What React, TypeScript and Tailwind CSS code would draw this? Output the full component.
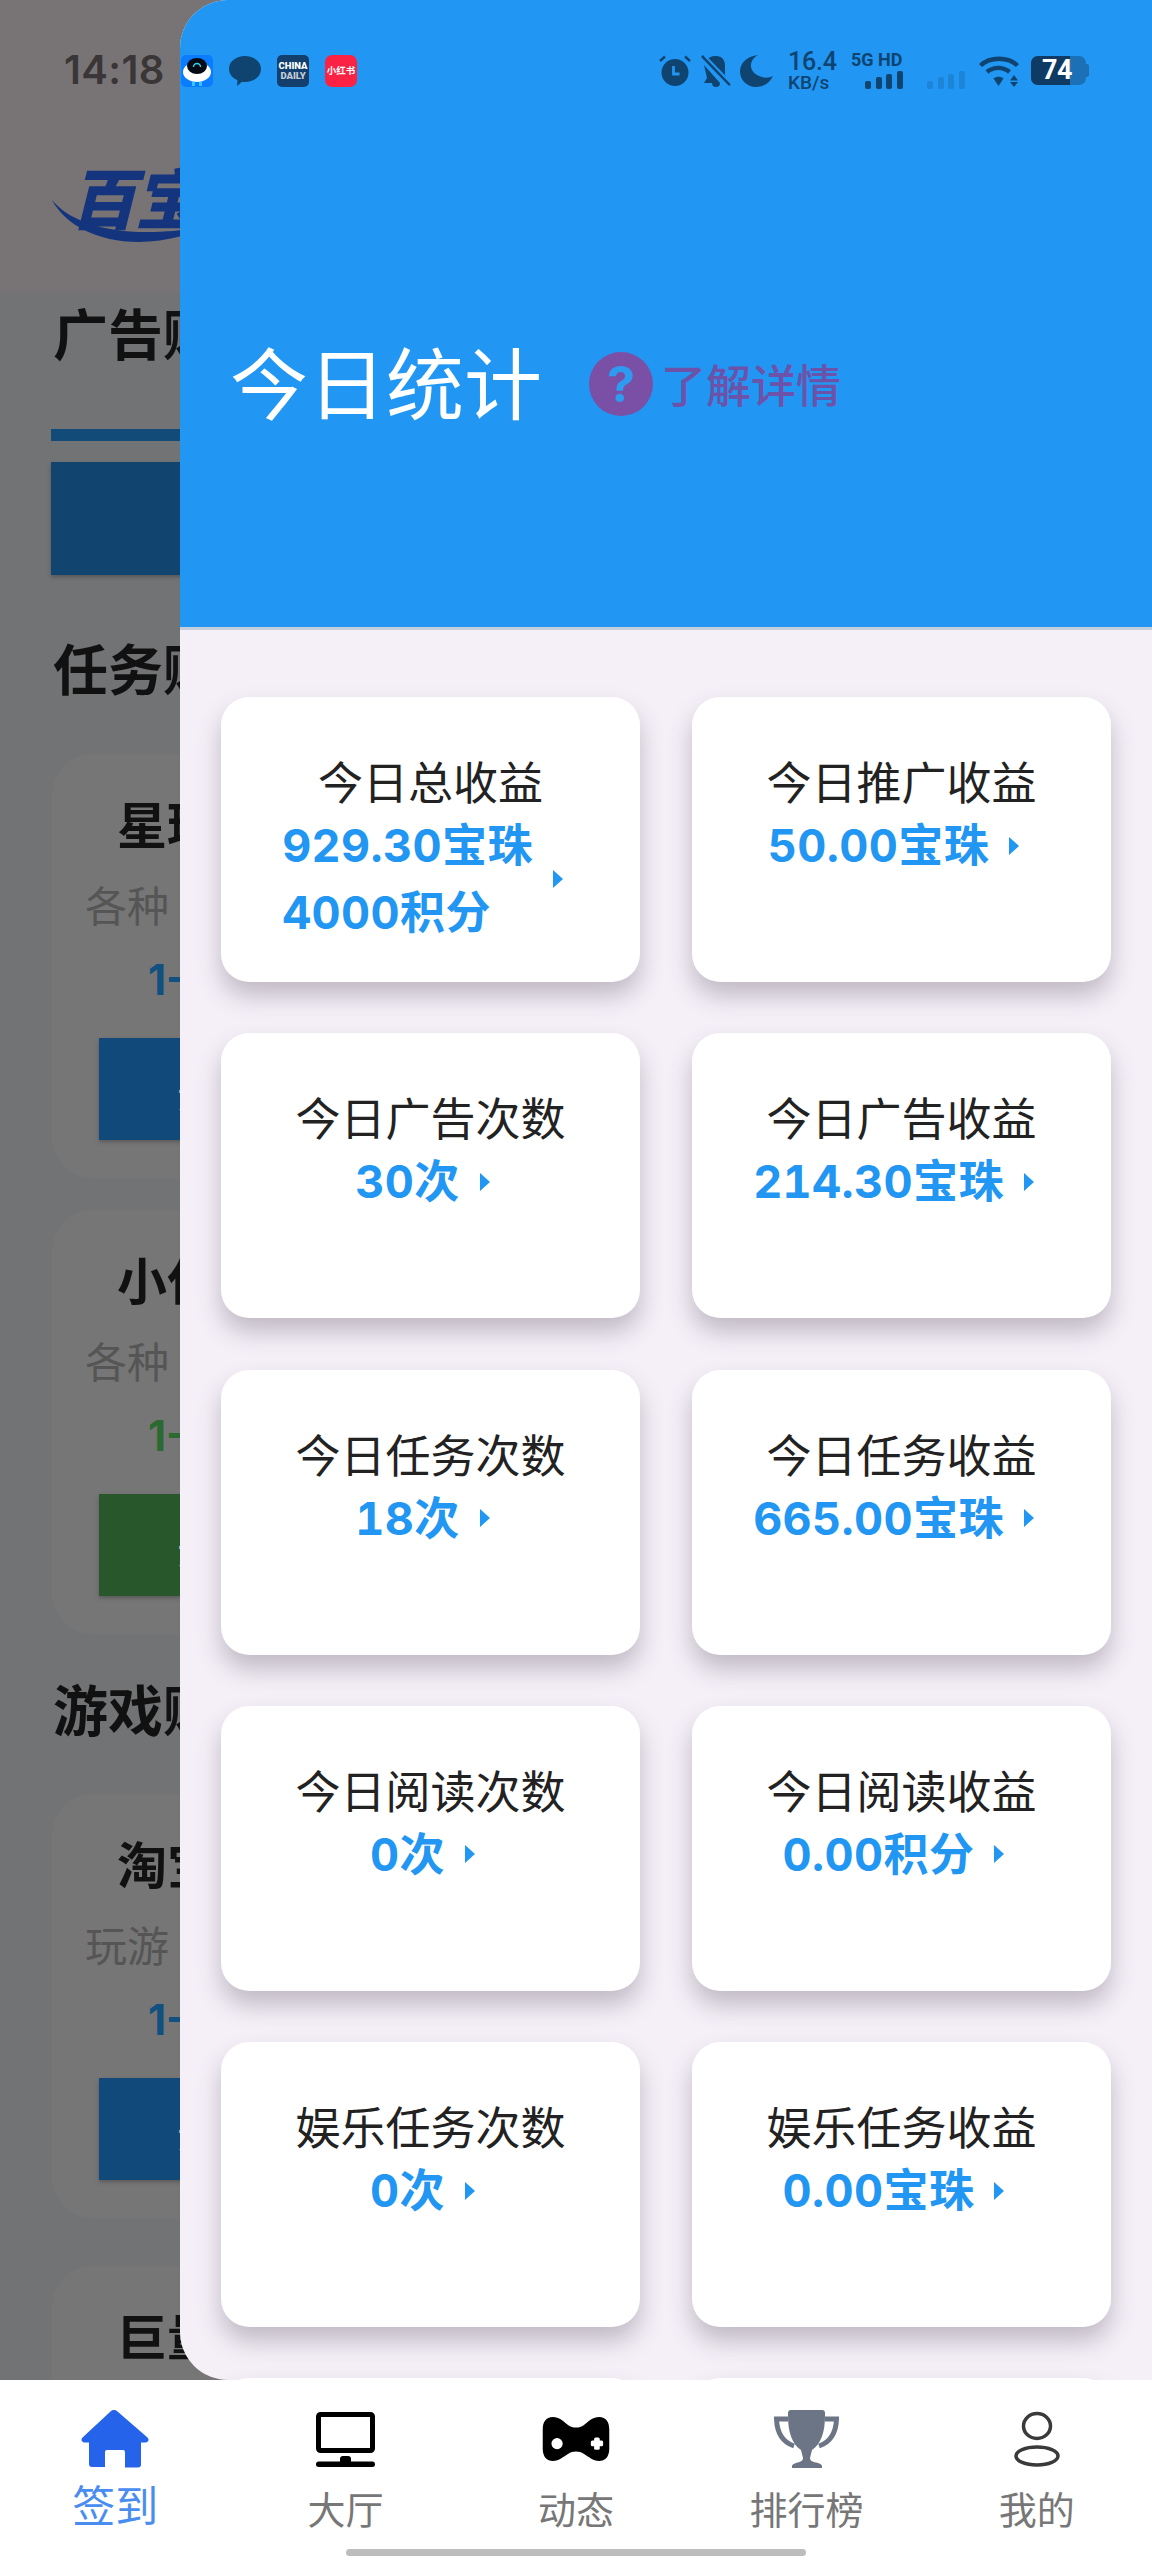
const stats = [
  { title: "今日总收益", lines: ["929.30宝珠", "4000积分"] },
  { title: "今日推广收益", lines: ["50.00宝珠"] },
  { title: "今日广告次数", lines: ["30次"] },
  { title: "今日广告收益", lines: ["214.30宝珠"] },
  { title: "今日任务次数", lines: ["18次"] },
  { title: "今日任务收益", lines: ["665.00宝珠"] },
  { title: "今日阅读次数", lines: ["0次"] },
  { title: "今日阅读收益", lines: ["0.00积分"] },
  { title: "娱乐任务次数", lines: ["0次"] },
  { title: "娱乐任务收益", lines: ["0.00宝珠"] },
  { title: "", lines: [] },
  { title: "", lines: [] },
];

const bars = [8, 12, 16, 20];

function SignalBars({ faded }: { faded?: boolean }) {
  return (
    <div className={`flex h-[18px] w-[38px] items-end justify-between ${faded ? "opacity-20" : ""}`}>
      {bars.map((h) => (
        <div key={h} className={`w-[6px] rounded-[2px] bg-[#0f4470] ${h === 8 ? "h-[8px]" : h === 12 ? "h-[12px]" : h === 16 ? "h-[15px]" : "h-[18px]"}`} />
      ))}
    </div>
  );
}

function StatusBar() {
  return (
    <div className="mt-[54px] flex h-[33px] items-center pl-px pr-[63px]">
      <div className="flex items-center gap-[16px]">
        <svg width="32" height="32" viewBox="0 0 32 32">
          <rect width="32" height="32" rx="5" fill="#0a7cff" />
          <ellipse cx="16" cy="17" rx="14" ry="10" fill="#fff" />
          <ellipse cx="16" cy="11" rx="10" ry="8" fill="#050b14" />
          <path d="M12.500 12a3.500 3.500 0 0 1 7 0" fill="none" stroke="#36d6e7" strokeWidth="1.400" />
          <rect x="11" y="27" width="3" height="4" fill="#36c6f0" />
          <rect x="18" y="27" width="3" height="4" fill="#36c6f0" />
        </svg>
        <svg width="32" height="32" viewBox="0 0 32 32">
          <path d="M16 1c9 0 16 5.500 16 13s-7 13-16 13c-1 0-2 0-3-.2L8 31l.5-5.800C3.500 23 0 19 0 14 0 6.500 7 1 16 1z" fill="#0f4470" />
        </svg>
        <div className="flex h-[32px] w-[32px] flex-col items-center justify-center rounded-[5px] bg-[#123f6e] font-['Roboto',sans-serif] text-[9.5px] leading-[10px] font-black text-white">
          <span>CHINA</span>
          <span className="text-[#c5ccd6]">DAILY</span>
        </div>
        <div className="flex h-[32px] w-[32px] items-center justify-center rounded-[7px] bg-[#fb2244] text-[9.5px] leading-none font-bold whitespace-nowrap text-white">
          小红书
        </div>
      </div>
      <div className="ml-auto flex items-center font-['Roboto',sans-serif] text-[#0f4470]">
        <svg width="32" height="31" viewBox="0 0 32 31">
          <circle cx="16" cy="17.500" r="13.500" fill="#0f4470" />
          <path d="M1 6l5-4.500M31 6l-5-4.500" stroke="#0f4470" strokeWidth="2.400" />
          <path d="M14.500 11v8h6" fill="none" stroke="#2196f3" strokeWidth="2.800" />
        </svg>
        <svg className="ml-[10px]" width="30" height="32" viewBox="0 0 30 32">
          <path d="M5 6C7 3 10 1 15 1c6 0 9 4 9 10v9l3 5z M3 10l16 18H3l3-5z M11 28h8a4 4 0 0 1-8 0z" fill="#0f4470" />
          <path d="M1 1l28 29" stroke="#0f4470" strokeWidth="2.600" />
          <path d="M4 1l27 28" stroke="#2196f3" strokeWidth="2" />
        </svg>
        <svg className="ml-[9px]" width="33" height="32" viewBox="0 0 33 32">
          <path d="M18 0C8 1 0 7.500 0 16.500 0 25 7 32 16 32c8 0 14-4.500 17-11-3 1.500-6 2-9 1.500C15 21 10 15 11 9c.5-3.500 3-7 7-9z" fill="#0f4470" />
        </svg>
        <div className="ml-[15px] flex w-[48px] flex-col">
          <span className="text-[25px] leading-[20px] font-medium tracking-[-0.2px]">16.4</span>
          <span className="mt-[3px] text-[19px] leading-[15px] font-medium">KB/s</span>
        </div>
        <div className="ml-[15px] flex w-[52px] flex-col items-end">
          <span className="w-full text-[18px] leading-[16px] font-bold whitespace-nowrap">5G HD</span>
          <div className="mt-[3px]">
            <SignalBars />
          </div>
        </div>
        <div className="mt-[18px] ml-[24px]">
          <SignalBars faded />
        </div>
        <svg className="ml-[14px]" width="40" height="32" viewBox="0 0 40 32">
          <path d="M1.500 10.500C11 1.500 29 1.500 38.500 10.500" fill="none" stroke="#0f4470" strokeWidth="4.400" />
          <path d="M8 17c6.500-5.500 16-5.500 22.500 0" fill="none" stroke="#0f4470" strokeWidth="4.400" />
          <path d="M14.500 23.500c3-2.500 7-2.500 10 0L19.500 31z" fill="#0f4470" />
          <path d="M35 20l4 5.500h-8zM31 27h8l-4 5z" fill="#0f4470" />
        </svg>
        <div className="ml-[12px] flex items-center">
          <div className="flex h-[29px] w-[55px] overflow-hidden rounded-[7px] bg-[#1c70b6]">
            <div className="flex w-[39px] items-center justify-end bg-[#0e3a63] text-[27px] font-bold text-white">
              <span className="-mr-[2px] tracking-[-0.5px]">74</span>
            </div>
          </div>
          <div className="h-[13px] w-[3px] rounded-r-[2px] bg-[#1c70b6]" />
        </div>
      </div>
    </div>
  );
}

function StatCard({ title, lines }: { title: string; lines: string[] }) {
  return (
    <div className="h-[285px] rounded-[28px] bg-white pt-[54px] shadow-[0_14px_24px_rgba(50,40,60,0.27)]">
      {title && (
        <>
          <div className="text-center text-[45px] leading-[60px] text-[#222]">{title}</div>
          <div className="mt-px flex items-center justify-center gap-[20px] pr-[16px] font-['Inter','Noto_Sans_CJK_SC',sans-serif] text-[45px] leading-[67px] font-bold tracking-[0.4px] text-[#2196f3] tabular-nums">
            <div>
              {lines.map((line) => (
                <div key={line}>{line}</div>
              ))}
            </div>
            <div className="h-0 w-0 border-y-[9px] border-l-[10px] border-y-transparent border-l-[#2196f3]" />
          </div>
        </>
      )}
    </div>
  );
}

function TaskCard({ title, desc, color, btn }: { title: string; desc: string; color: string; btn: string }) {
  return (
    <div className="h-[424px] rounded-[40px] bg-[#767676] pt-[38px]">
      <div className="pl-[65px] text-[50px] leading-[60px] font-bold text-[#111]">{title}</div>
      <div className="mt-[22px] pl-[33px] text-[42px] leading-[60px] text-[#555]">{desc}</div>
      <div className={`mt-[18px] pl-[96px] font-['Inter',sans-serif] text-[42px] leading-[56px] font-bold ${color}`}>1-</div>
      <div className={`mt-[30px] ml-[47px] flex h-[102px] items-center pl-[78px] text-[42px] text-[#b6bcc4] shadow-[0_2px_4px_rgba(0,0,0,0.25)] ${btn}`}>
        开始
      </div>
    </div>
  );
}

function SectionTitle({ children, className }: { children: string; className: string }) {
  return <div className={`pl-[53px] text-[55px] leading-[64px] font-bold text-[#111] ${className}`}>{children}</div>;
}

function BackgroundPage() {
  return (
    <div className="h-full bg-[#727375]">
      <div className="h-[292px] bg-[#787476] pt-[50px]">
        <div className="pl-[64px] font-['Inter',sans-serif] text-[40px] leading-[40px] font-semibold tracking-[0.4px] text-[#3a3637]">14:18</div>
        <div className="relative mt-[70px] ml-[70px] text-[66px] leading-[70px] font-black tracking-[-2px] text-[#14347e] italic">
          百宝
          <svg className="absolute top-[40px] -left-[18px]" width="130" height="60" viewBox="0 0 130 60">
            <path d="M0 0C18 22 60 38 130 30V36C70 52 18 34 0 0z" fill="#14347e" />
          </svg>
        </div>
      </div>
      <SectionTitle className="mt-[7px]">广告赚</SectionTitle>
      <div className="mt-[66px] h-[12px] bg-[#124b78] ml-[51px]" />
      <div className="mt-[21px] ml-[51px] h-[113px] bg-[#11446f] shadow-[0_2px_4px_rgba(0,0,0,0.25)]" />
      <SectionTitle className="mt-[59px]">任务赚</SectionTitle>
      <div className="mt-[56px] flex flex-col gap-[32px] pl-[52px]">
        <TaskCard title="星球" desc="各种" color="text-[#11507f]" btn="bg-[#114a7a]" />
        <TaskCard title="小任" desc="各种" color="text-[#2b6a30]" btn="bg-[#27572b]" />
      </div>
      <SectionTitle className="mt-[41px]">游戏赚</SectionTitle>
      <div className="mt-[55px] flex flex-col gap-[48px] pl-[52px]">
        <TaskCard title="淘宝" desc="玩游" color="text-[#11507f]" btn="bg-[#114a7a]" />
        <TaskCard title="巨量" desc="各种" color="text-[#11507f]" btn="bg-[#114a7a]" />
      </div>
    </div>
  );
}

function Drawer() {
  return (
    <div className="absolute top-0 right-0 bottom-0 left-[180px] flex flex-col overflow-hidden rounded-l-[48px] bg-[#f5f0f8]">
      <div className="h-[630px] shrink-0 border-b-[3px] border-[#c6cfdc] bg-[#2196f3]">
        <StatusBar />
        <div className="mt-[248px] flex items-center pl-[50px]">
          <span className="mb-[8px] text-[78px] leading-[90px] text-white">今日统计</span>
          <div className="ml-[47px] flex h-[64px] w-[64px] items-center justify-center rounded-full bg-[#7a4fa6] font-['Inter',sans-serif] text-[50px] font-bold text-[#2d9bf0]">
            ?
          </div>
          <span className="ml-[8px] text-[45px] font-medium text-[#6c52a8]">了解详情</span>
        </div>
      </div>
      <div className="grid grid-cols-2 gap-x-[52px] gap-y-[51.25px] px-[41px] pt-[67px]">
        {stats.map((s, i) => (
          <StatCard key={i} title={s.title} lines={s.lines} />
        ))}
      </div>
    </div>
  );
}

function HomeIcon() {
  return (
    <svg width="68" height="58" viewBox="0 0 68 58">
      <path
        d="M29.500 1.500a5 5 0 0 1 7 0l30 26c2 2 1 5-2 5H60v22a3 3 0 0 1-3 3H44V42a2 2 0 0 0-2-2H26a2 2 0 0 0-2 2v15H11a3 3 0 0 1-3-3V32.500H3.500c-3 0-4-3-2-5z"
        fill="#2563eb"
      />
    </svg>
  );
}

function MonitorIcon() {
  return (
    <svg width="59" height="55" viewBox="0 0 59 55">
      <rect x="2.500" y="2.500" width="54" height="36" rx="2" fill="none" stroke="#000" strokeWidth="5" />
      <rect y="49.500" width="59" height="5.500" rx="2.700" fill="#000" />
      <path d="M24 50v-3a3 3 0 0 1 3-3h5a3 3 0 0 1 3 3v3z" fill="#000" />
    </svg>
  );
}

function GameIcon() {
  return (
    <svg width="68" height="44" viewBox="0 0 65 43">
      <path
        d="M10 0C16 0 20 4 25 8c4 3 11 3 15 0C45 4 49 0 55 0c7 0 10 5 10 12v19c0 8-4 12-10 12-6 0-10-4-15-7-4-3-11-3-15 0-5 3-9 7-15 7-6 0-10-4-10-12V12C0 5 3 0 10 0z"
        fill="#000"
      />
      <circle cx="14" cy="26" r="5.500" fill="#fff" />
      <rect x="47" y="23" width="12" height="5.500" rx="1.500" fill="#fff" />
      <rect x="50.200" y="20" width="5.500" height="12" rx="1.500" fill="#fff" />
    </svg>
  );
}

function TrophyIcon() {
  return (
    <svg width="67" height="58" viewBox="0 0 65 58">
      <path
        d="M17 0h31a3 3 0 0 1 3 3v3c0 16-4 28-13 34l-2 8c0 3 3 4 8 5 4 1 4 3 4 3v2H18v-2s0-2 4-3c4-1 7-2 7-5l-2-8C18 34 14 22 14 6V3a3 3 0 0 1 3-3z"
        fill="#6b7585"
      />
      <path d="M14 9H2.500C3 22 8 32 20 36M51 9h11.500C62 22 57 32 45 36" fill="none" stroke="#6b7585" strokeWidth="5" />
    </svg>
  );
}

function PersonIcon() {
  return (
    <svg width="46" height="56" viewBox="0 0 46 56">
      <ellipse cx="23" cy="15" rx="13.500" ry="12.500" fill="none" stroke="#3a3a3a" strokeWidth="3.500" />
      <ellipse cx="23" cy="45" rx="21" ry="9" fill="none" stroke="#3a3a3a" strokeWidth="3.500" />
    </svg>
  );
}

const tabs = [
  { label: "签到", icon: <HomeIcon />, active: true },
  { label: "大厅", icon: <MonitorIcon /> },
  { label: "动态", icon: <GameIcon /> },
  { label: "排行榜", icon: <TrophyIcon /> },
  { label: "我的", icon: <PersonIcon /> },
];

function BottomNav() {
  return (
    <div className="h-[180px] shrink-0 bg-white">
      <div className="grid h-[169px] grid-cols-5">
        {tabs.map((tab) => (
          <div key={tab.label} className="flex flex-col items-center pt-[30px]">
            <div className="flex h-[58px] items-center justify-center">{tab.icon}</div>
            {tab.active ? (
              <span className="mt-[10px] text-[43px] leading-[50px] text-[#4a8df0]">{tab.label}</span>
            ) : (
              <span className="mt-[15px] text-[38px] leading-[50px] text-[#777]">{tab.label}</span>
            )}
          </div>
        ))}
      </div>
      <div className="mx-auto h-[7px] w-[460px] rounded-full bg-[#bdbdbd]" />
    </div>
  );
}

export default function App() {
  return (
    <div className="flex h-[2560px] w-[1152px] flex-col overflow-hidden bg-white font-['Noto_Sans_CJK_SC','Noto_Sans',sans-serif]">
      <div className="relative h-[2380px] shrink-0 overflow-hidden">
        <BackgroundPage />
        <Drawer />
      </div>
      <BottomNav />
    </div>
  );
}
